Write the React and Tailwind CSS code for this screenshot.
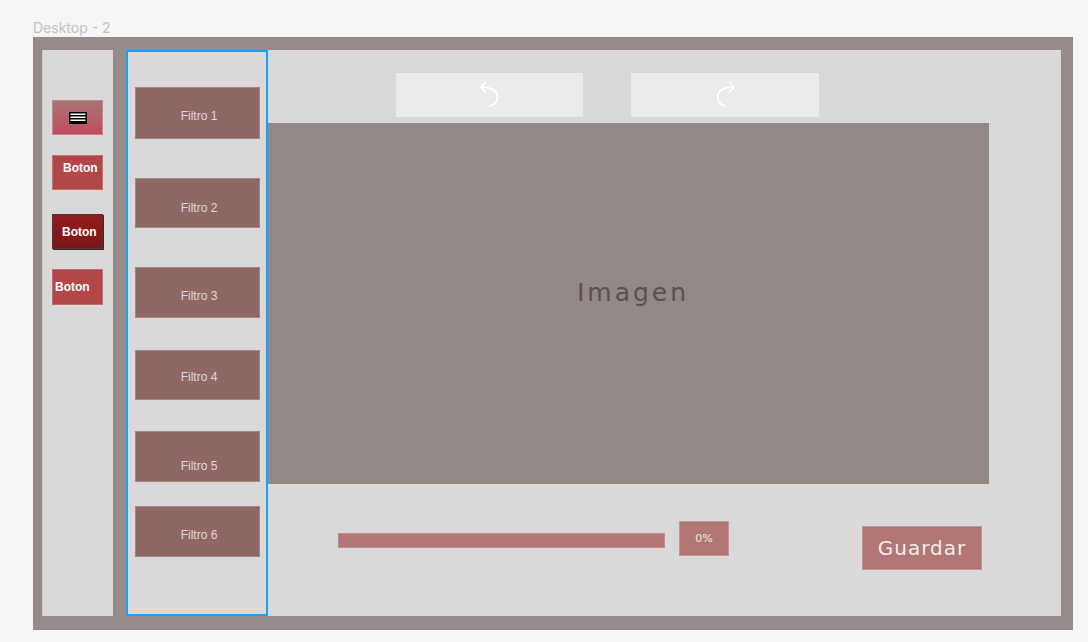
import React from "react";

function UndoIcon({ flip }) {
  return (
    <svg width="22" height="28" viewBox="0 0 22 28" fill="none" stroke="white" strokeWidth="1.6" strokeLinecap="round" strokeLinejoin="round" style={flip ? { transform: "scaleX(-1)" } : undefined}>
      <path d="M2 6 C 12 6, 18.5 10, 18.5 16 C 18.5 21, 14 25, 10.5 25" />
      <path d="M6.5 1.5 L2 6 L6.5 11" />
    </svg>
  );
}

function MenuIcon() {
  return (
    <svg width="18" height="12" viewBox="0 0 18 12">
      <rect x="0" y="0" width="18" height="12" fill="black" />
      <rect x="1.5" y="1.5" width="15" height="1.5" fill="white" />
      <rect x="1.5" y="4.5" width="15" height="1.5" fill="white" />
      <rect x="1.5" y="7.5" width="15" height="1.5" fill="white" />
    </svg>
  );
}

const filtros = [
  { label: "Filtro 1", mt: "mt-[35px]", h: "h-[52px]", pt: "pt-[21px]" },
  { label: "Filtro 2", mt: "mt-[39px]", h: "h-[50px]", pt: "pt-[22px]" },
  { label: "Filtro 3", mt: "mt-[39px]", h: "h-[51px]", pt: "pt-[21px]" },
  { label: "Filtro 4", mt: "mt-[32px]", h: "h-[50px]", pt: "pt-[19px]" },
  { label: "Filtro 5", mt: "mt-[31px]", h: "h-[51px]", pt: "pt-[27px]" },
  { label: "Filtro 6", mt: "mt-[24px]", h: "h-[51px]", pt: "pt-[21px]" },
];

export default function App() {
  return (
    <div className="w-[1088px] h-[642px] bg-[#f5f5f5] overflow-hidden" style={{ fontFamily: "'Liberation Sans', Arial, sans-serif" }}>
      <div className="pt-[19px] pl-[33px] h-[37px]">
        <div className="text-[14px] leading-[18px] text-[#c2c2c2]" style={{ fontFamily: "Inter, sans-serif" }}>Desktop - 2</div>
      </div>
      <div className="ml-[33px] w-[1040px] h-[593px] bg-[#968b88] pt-[13px] pl-[9px] pr-[12px] pb-[14px] flex gap-[13px]">
        {/* Left sidebar */}
        <div className="w-[71px] bg-[#d9d9d9] border-l border-[#c8c8c8] pt-[50px] pl-[9px] flex flex-col">
          <div className="w-[51px] h-[35px] flex items-center justify-center border border-[#c08a8a] bg-gradient-to-b from-[#a57474] to-[#c24a5e]">
            <MenuIcon />
          </div>
          <div className="mt-[20px] w-[51px] h-[35px] flex items-center pl-[10px] pb-[10px] bg-[#b24747] border border-[#c47070] text-white font-bold text-[12px] leading-[14px]">
            Boton
          </div>
          <div className="mt-[24px] w-[51px] h-[35px] flex items-center pl-[9px] bg-gradient-to-b from-[#921c1c] to-[#7e1616] border border-[#4f3535] shadow-[1px_1px_0_#3a2a2a] text-white font-bold text-[12px] leading-[14px]">
            Boton
          </div>
          <div className="mt-[20px] w-[51px] h-[36px] flex items-center pl-[2px] bg-[#b34646] border border-[#c46d6d] text-white font-bold text-[12px] leading-[14px]">
            Boton
          </div>
        </div>

        {/* Main panel */}
        <div className="flex-1 bg-[#d9d9d9] flex">
          {/* Filters */}
          <div className="w-[142px] border-2 border-[#18a0fb] flex flex-col px-[7px]">
            {filtros.map((f) => (
              <div key={f.label} className={`${f.mt} ${f.h} ${f.pt} w-[125px] bg-[#8f6866] border border-[#a48585] flex justify-center text-[12px] leading-[14px] text-[#e2d6d6]`}>
                <span className="pl-[3px]">{f.label}</span>
              </div>
            ))}
          </div>

          {/* Right area */}
          <div className="flex-1 flex flex-col pt-[23px]">
            <div className="flex pl-[128px] gap-[48px]">
              <div className="w-[187px] h-[44px] bg-[#ebebeb] flex items-center justify-center">
                <UndoIcon />
              </div>
              <div className="w-[188px] h-[44px] bg-[#ebebeb] flex items-center justify-center">
                <UndoIcon flip />
              </div>
            </div>
            <div className="mt-[6px] w-[721px] h-[361px] bg-[#928886] flex items-center justify-center pb-[22px] pl-[9px]">
              <span className="text-[25px] leading-[30px] tracking-[3px] text-[#5b5150]" style={{ fontFamily: "'DejaVu Sans', sans-serif" }}>Imagen</span>
            </div>
            <div className="flex items-start">
              <div className="ml-[70px] mt-[49px] w-[327px] h-[15px] bg-[#b07774] border border-[#c08e8c]" />
              <div className="ml-[14px] mt-[37px] w-[50px] h-[35px] bg-[#b07774] border border-[#c49593] flex items-center justify-center text-[11px] leading-[12px] text-[#f2e6e6]" style={{ fontFamily: "'DejaVu Sans', sans-serif" }}>
                0%
              </div>
              <div className="ml-[133px] mt-[42px] w-[120px] h-[44px] bg-[#b07774] border border-[#c49593] flex items-center justify-center text-[20px] leading-[24px] tracking-[1px] text-[#f4ecec]" style={{ fontFamily: "'DejaVu Sans', sans-serif" }}>
                Guardar
              </div>
            </div>
          </div>
        </div>
      </div>
    </div>
  );
}
